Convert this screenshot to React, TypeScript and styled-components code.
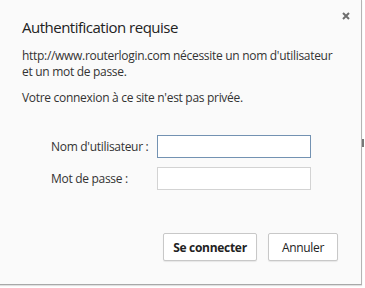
import React from "react";
import styled, { createGlobalStyle } from "styled-components";

const Global = createGlobalStyle`
  html, body { margin: 0; padding: 0; background: #ffffff; }
  body { font-family: "Open Sans", "Noto Sans", sans-serif; }
`;

const Page = styled.div`
  position: relative;
  width: 365px;
  height: 288px;
  overflow: hidden;
  background: #ffffff;
`;

const Dialog = styled.div`
  box-sizing: border-box;
  width: 362px;
  height: 285px;
  background: #fafafa;
  border-right: 1px solid #b4b4b4;
  border-bottom: 1px solid #a8a8a8;
  box-shadow: 0 1px 1px rgba(0,0,0,0.12);
  display: flex;
  flex-direction: column;
  padding: 17px 0 0 22px;
  color: #333333;
`;

const Header = styled.div`
  display: flex;
  justify-content: space-between;
  align-items: flex-start;
`;

const Title = styled.h1`
  margin: 0;
  font-weight: 400;
  font-size: 15px;
  line-height: 20px;
  letter-spacing: -0.5px;
  color: #222222;
`;

const Close = styled.button`
  border: 0;
  background: none;
  padding: 0;
  margin: -5px 11px 0 0;
  width: 8px;
  height: 8px;
  display: flex;
  align-items: center;
  justify-content: center;
`;

const Text = styled.p<{ $top: number }>`
  margin: ${(p) => p.$top}px 0 0 0;
  font-size: 12px;
  line-height: 16px;
  letter-spacing: -0.3px;
  color: #333333;
`;

const Form = styled.div`
  display: grid;
  grid-template-columns: 106px 154px;
  row-gap: 9px;
  align-items: center;
  margin: 29px 0 0 29px;
`;

const Label = styled.label`
  font-size: 12px;
  letter-spacing: -0.3px;
  color: #333333;
`;

const Input = styled.input<{ $focus?: boolean }>`
  box-sizing: border-box;
  width: 154px;
  height: 23px;
  margin: 0;
  background: #ffffff;
  border: 1px solid ${(p) => (p.$focus ? "#7392b2" : "#d3d3d3")};
  outline: none;
`;

const Buttons = styled.div`
  display: flex;
  gap: 11px;
  margin: 43px 0 0 141px;
`;

const Button = styled.button<{ $primary?: boolean }>`
  box-sizing: border-box;
  height: 28px;
  padding: 0;
  width: ${(p) => (p.$primary ? 94 : 70)}px;
  background: #ffffff;
  border: 1px solid #c8c8c8;
  border-radius: 2px;
  box-shadow: 0 1px 1px rgba(0,0,0,0.08);
  font-family: "Open Sans", "Noto Sans", sans-serif;
  font-size: 12px;
  letter-spacing: -0.3px;
  font-weight: ${(p) => (p.$primary ? 700 : 400)};
  color: #222222;
`;

const Mark = styled.div`
  position: absolute;
  left: 362px;
  top: 139px;
  width: 2px;
  height: 8px;
  background: #777777;
`;

export default function App() {
  return (
    <Page>
      <Global />
      <Dialog>
        <Header>
          <Title>Authentification requise</Title>
          <Close aria-label="Fermer">
            <svg width="8" height="8" viewBox="0 0 8 8">
              <path d="M1 1 L7 7 M7 1 L1 7" stroke="#6e6e6e" strokeWidth="2" />
            </svg>
          </Close>
        </Header>
        <Text $top={11}>
          http://www.routerlogin.com nécessite un nom d'utilisateur
          <br />
          et un mot de passe.
        </Text>
        <Text $top={10}>Votre connexion à ce site n'est pas privée.</Text>
        <Form>
          <Label>Nom d'utilisateur :</Label>
          <Input $focus />
          <Label>Mot de passe :</Label>
          <Input type="password" />
        </Form>
        <Buttons>
          <Button $primary>Se connecter</Button>
          <Button>Annuler</Button>
        </Buttons>
      </Dialog>
      <Mark />
    </Page>
  );
}
